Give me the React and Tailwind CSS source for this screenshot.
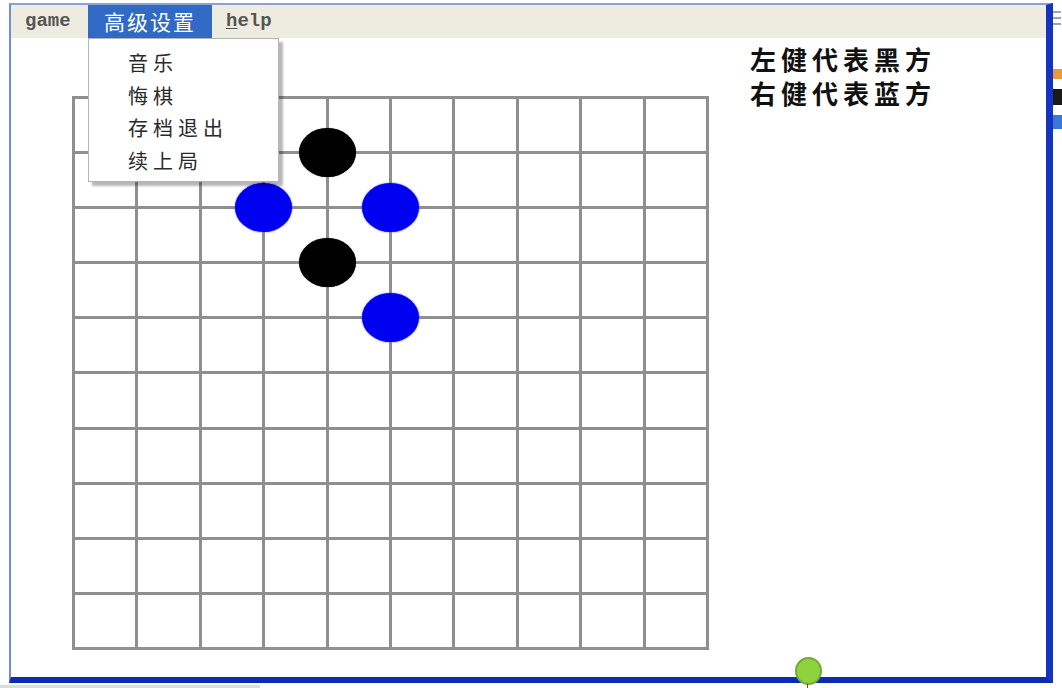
import { useState } from 'react';

const cjk = '"Noto Sans CJK SC", "Noto Sans", sans-serif';
const mono = '"Liberation Mono", "DejaVu Sans Mono", monospace';

const COL = 63.4;
const ROW = 55.1;

// stones on intersections: [col, row, colour]
const stones = [
  [4, 1, 'black'],
  [3, 2, 'blue'],
  [5, 2, 'blue'],
  [4, 3, 'black'],
  [5, 4, 'blue'],
];

const menuItems = ['音乐', '悔棋', '存档退出', '续上局'];

function Board() {
  const cells = Array.from({ length: 100 });
  return (
    <div className="relative w-[637px] h-[554px] border-t-[3px] border-l-[3px] border-[#8f8f8f] grid grid-cols-[repeat(10,63.4px)] grid-rows-[repeat(10,55.1px)]">
      {cells.map((_, i) => (
        <div key={i} className="border-r-[3px] border-b-[3px] border-[#8f8f8f]" />
      ))}
      {stones.map(([c, r, color], i) => (
        <div
          key={i}
          className={`absolute w-[57px] h-[49px] rounded-[50%] ${
            color === 'black' ? 'bg-black shadow-[0_0_1px_#444]' : 'bg-[#0000f0] shadow-[0_0_2px_#4a4aff]'
          }`}
          style={{ left: -1.5 + COL * c - 28.5, top: -1.5 + ROW * r - 24.5 }}
        />
      ))}
    </div>
  );
}

export default function App() {
  const [menuOpen] = useState(true);

  return (
    <div className="relative w-[1062px] h-[688px] bg-white overflow-hidden">
      <div className="flex pt-[3px] pl-[9px]">
        {/* Window */}
        <div className="w-[1044px] h-[680px] flex flex-col bg-white border-t-2 border-l-2 border-t-[#8aa2d8] border-l-[#6f8ed6] border-r-[7px] border-r-[#1434c0] border-b-[6px] border-b-[#0c2cb4]">
          {/* Menu bar */}
          <div className="relative z-20 h-[33px] flex items-stretch bg-[#eeebe1]">
            <div
              className="w-[77px] pl-[14px] flex items-center text-[19px] font-bold text-[#555]"
              style={{ fontFamily: mono }}
            >
              game
            </div>
            <div className="relative">
              <div
                className="h-full w-[124px] pt-[1px] flex items-center justify-center bg-[#316ac5] text-white text-[21px] tracking-[2px]"
                style={{ fontFamily: cjk }}
              >
                高级设置
              </div>
              {menuOpen && (
                <div className="absolute left-0 top-full w-[191px] h-[144px] pt-[8px] bg-white border border-[#b4b4b4] shadow-[4px_4px_2px_rgba(0,0,0,0.28)]">
                  {menuItems.map((m) => (
                    <div
                      key={m}
                      className="h-[32.5px] pl-[39px] flex items-center text-[20px] tracking-[5px] text-[#2a2a2a]"
                      style={{ fontFamily: cjk }}
                    >
                      {m}
                    </div>
                  ))}
                </div>
              )}
            </div>
            <div
              className="pl-[14px] flex items-center text-[19px] font-bold text-[#555]"
              style={{ fontFamily: mono }}
            >
              <span className="underline underline-offset-2">h</span>elp
            </div>
          </div>

          {/* Canvas */}
          <div className="flex-1 flex items-start pl-[61px]">
            <div className="mt-[58px]">
              <Board />
            </div>
            <div
              className="ml-[41px] mt-[4px] flex flex-col text-[26px] leading-[34px] font-bold tracking-[5px] text-[#111]"
              style={{ fontFamily: cjk }}
            >
              <span>左健代表黑方</span>
              <span>右健代表蓝方</span>
            </div>
          </div>
        </div>

        {/* Desktop strip */}
        <div className="flex-1 flex flex-col items-start pt-[8px] gap-[4px]">
          <div className="w-[8px] h-[2px] bg-[#9aa4b8]" />
          <div className="w-[8px] h-[2px] bg-[#9aa4b8]" />
          <div className="w-[8px] h-[2px] bg-[#9aa4b8] mb-[40px]" />
          <div className="w-[9px] h-[10px] bg-[#e89a3c]" />
          <div className="w-[9px] h-[16px] bg-[#1a1a1a] mt-[6px]" />
          <div className="w-[9px] h-[14px] bg-[#3a78d8] mt-[6px]" />
        </div>
      </div>

      {/* bottom strip */}
      <div className="w-[260px] h-[3px] mt-[2px] bg-[#dcdcdc]" />

      {/* cursor marker */}
      <div className="absolute left-[795px] top-[657px] w-[27px] h-[28px] rounded-[50%] bg-[#8ed23e] border-2 border-[#76a83a]" />
      <div className="absolute left-[807px] top-[684px] w-[1px] h-[4px] bg-[#555]" />
    </div>
  );
}
